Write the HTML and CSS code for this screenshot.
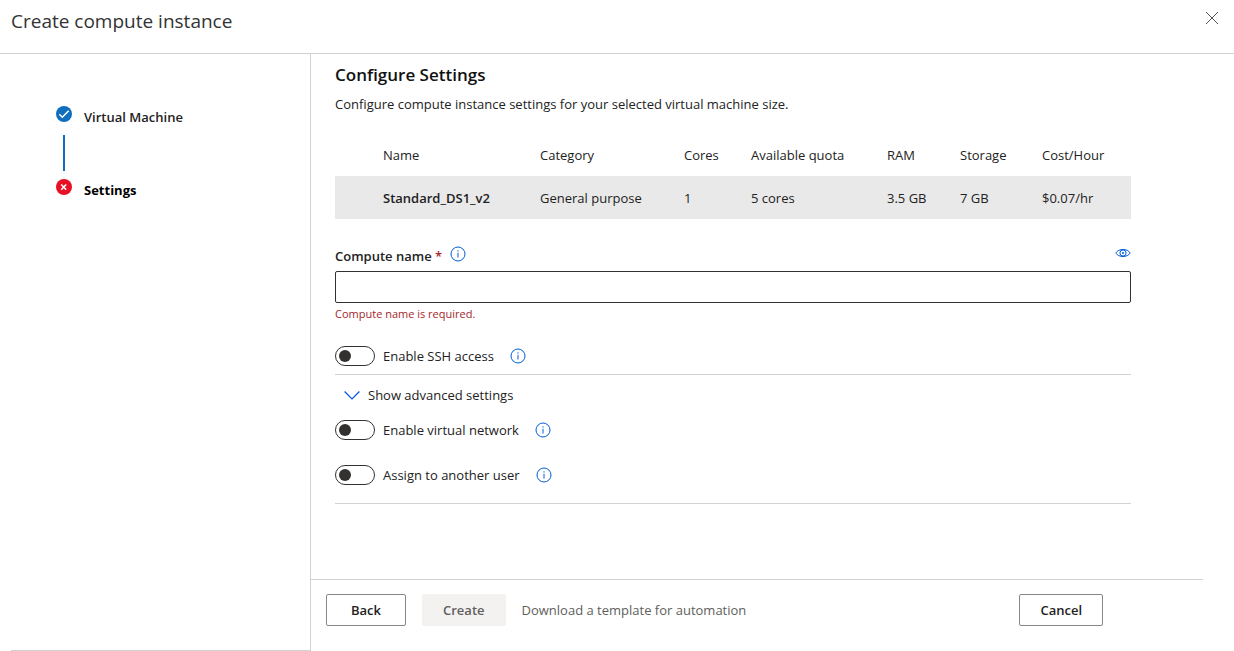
FILE: index.html
```html
<!DOCTYPE html>
<html lang="en">
<head>
<meta charset="utf-8">
<meta name="viewport" content="width=device-width, initial-scale=1">
<title>Create compute instance</title>
<link rel="stylesheet" href="styles.css">
</head>
<body>
<svg class="sprite" aria-hidden="true">
  <symbol id="icon-info" viewBox="0 0 16 16">
    <circle cx="8" cy="8" r="7" fill="none" stroke="currentColor" stroke-width="1"/>
    <path d="M8 6.8v4.7" stroke="currentColor" stroke-width="1"/>
    <circle cx="8" cy="4.9" r=".7" fill="currentColor"/>
  </symbol>
</svg>
<header class="panel-header">
  <h1 class="panel-title">Create compute instance</h1>
  <button class="icon-button close" type="button" aria-label="Close">
    <svg width="14" height="14" viewBox="0 0 14 14"><path d="M1 1l12 12M13 1L1 13" stroke="#555" stroke-width="1" fill="none"/></svg>
  </button>
</header>
<div class="panel-body">
  <nav class="steps" aria-label="Steps">
    <div class="step">
      <svg width="16" height="16" viewBox="0 0 16 16"><circle cx="8" cy="8" r="8" fill="#106ebe"/><path d="M3.3 8.2l3 3 6.400-6.500" fill="none" stroke="#fff" stroke-width="1.5"/></svg>
      <span class="step-label">Virtual Machine</span>
    </div>
    <div class="connector"></div>
    <div class="step" aria-current="step">
      <svg width="16" height="16" viewBox="0 0 16 16"><circle cx="8" cy="8" r="8" fill="#e81123"/><path d="M5.2 5.500l5 5.200M10.200 5.500l-5 5.200" fill="none" stroke="#fff" stroke-width="1.6"/></svg>
      <span class="step-label current">Settings</span>
    </div>
  </nav>
  <div class="content">
    <main class="settings">
      <h2 class="section-title">Configure Settings</h2>
      <p class="description">Configure compute instance settings for your selected virtual machine size.</p>
      <table class="machine">
        <colgroup>
          <col class="col-select"><col class="col-name"><col class="col-category"><col class="col-cores"><col class="col-quota"><col class="col-ram"><col class="col-storage"><col class="col-cost">
        </colgroup>
        <thead>
          <tr><td></td><th scope="col">Name</th><th scope="col">Category</th><th scope="col">Cores</th><th scope="col">Available quota</th><th scope="col">RAM</th><th scope="col">Storage</th><th scope="col">Cost/Hour</th></tr>
        </thead>
        <tbody>
          <tr><td></td><th class="machine-name" scope="row">Standard_DS1_v2</th><td>General purpose</td><td>1</td><td>5 cores</td><td>3.5 GB</td><td>7 GB</td><td>$0.07/hr</td></tr>
        </tbody>
      </table>
      <div class="field-head">
        <label class="field-label" for="compute-name">Compute name <span class="required">*</span></label>
        <button class="icon-button info" type="button" aria-label="About compute name"><svg width="16" height="16"><use href="#icon-info"/></svg></button>
        <button class="icon-button eye" type="button" aria-label="Preview">
          <svg width="16" height="14" viewBox="0 0 16 14" fill="none" stroke="currentColor"><path d="M.8 7C2.3 4.600 4.900 3.500 8 3.500S13.700 4.600 15.200 7C13.700 9.400 11.100 10.500 8 10.500S2.300 9.400.8 7z"/><circle cx="8" cy="7" r="3.100"/><circle cx="8" cy="7" r="1" fill="currentColor" stroke="none"/></svg>
        </button>
      </div>
      <input class="text-box" id="compute-name" type="text" required aria-describedby="name-error">
      <p class="error" id="name-error">Compute name is required.</p>
      <div class="toggle-row ssh">
        <input class="toggle" id="ssh" type="checkbox" role="switch">
        <label for="ssh">Enable SSH access</label>
        <button class="icon-button toggle-info" type="button" aria-label="About SSH access"><svg width="16" height="16"><use href="#icon-info"/></svg></button>
      </div>
      <section class="advanced">
        <button class="disclosure" type="button">
          <svg width="16" height="16" viewBox="0 0 16 16"><path d="M.6 4.5L8 11.9l7.4-7.4" fill="none" stroke="#015cda" stroke-width="1.3"/></svg>
          Show advanced settings
        </button>
        <div class="toggle-row">
          <input class="toggle" id="network" type="checkbox" role="switch">
          <label for="network">Enable virtual network</label>
          <button class="icon-button toggle-info" type="button" aria-label="About virtual network"><svg width="16" height="16"><use href="#icon-info"/></svg></button>
        </div>
        <div class="toggle-row assign">
          <input class="toggle" id="assign" type="checkbox" role="switch">
          <label for="assign">Assign to another user</label>
          <button class="icon-button toggle-info" type="button" aria-label="About assigning to another user"><svg width="16" height="16"><use href="#icon-info"/></svg></button>
        </div>
      </section>
    </main>
    <footer class="actions">
      <button class="button" type="button">Back</button>
      <button class="button" type="button" disabled>Create</button>
      <button class="text-button" type="button" disabled>Download a template for automation</button>
      <button class="button cancel" type="button">Cancel</button>
    </footer>
  </div>
</div>
</body>
</html>
```

FILE: styles.css
```css
* { box-sizing: border-box; }

body {
  display: flex;
  flex-direction: column;
  min-height: 100vh;
  margin: 0;
  background: #fff;
  color: #222;
  font: 13px/20px "Open Sans", "Noto Sans", sans-serif;
}

h1, h2, p { margin: 0; }
svg { display: block; flex: none; }
button, input { font: inherit; color: inherit; }
.sprite { position: absolute; width: 0; height: 0; }

.icon-button {
  padding: 0;
  border: 0;
  background: none;
  color: #015cda;
}

.panel-header {
  display: flex;
  justify-content: space-between;
  align-items: flex-start;
  padding: 7px 15px 18px 11px;
  border-bottom: 1px solid #d2d2d2;
}
.panel-title { font-size: 19px; font-weight: 400; line-height: 28px; color: #333; }
.close { margin-top: 4px; }

.panel-body { display: flex; flex: 1; }

.steps {
  flex: none;
  width: 300px;
  margin-left: 11px;
  padding: 52px 0 0 45px;
  border-right: 1px solid #d2d2d2;
  border-bottom: 1px solid #d2d2d2;
}
.step { display: flex; gap: 12px; line-height: 22px; }
.step-label { font-weight: 600; }
.current { font-weight: 700; color: #000; }
.connector { width: 2px; height: 36px; margin: 7px 0 8px 7px; background: #106ebe; }

.content { display: flex; flex: 1; flex-direction: column; min-width: 0; }
.settings { flex: 1; padding: 9px 103px 24px 24px; }
.section-title { font-size: 17px; font-weight: 600; line-height: 24px; color: #111; }
.description { margin-top: 7px; }

.machine {
  width: 100%;
  margin-top: 20px;
  border-collapse: collapse;
  table-layout: fixed;
}
.machine th, .machine td {
  height: 42px;
  padding: 0;
  font-weight: 400;
  text-align: left;
  white-space: nowrap;
}
.machine tbody { background: #e9e9e9; }
.machine tbody th, .machine tbody td { height: 43px; }
.machine .machine-name { font-weight: 600; }
.col-select { width: 48px; }
.col-name { width: 157px; }
.col-category { width: 144px; }
.col-cores { width: 67px; }
.col-quota { width: 136px; }
.col-ram { width: 73px; }
.col-storage { width: 82px; }
.col-cost { width: 89px; }

.field-head { display: flex; align-items: flex-start; margin-top: 27px; }
.field-label { font-weight: 600; }
.required { color: #a4262c; }
.info { margin-left: 8px; }
.eye { margin-left: auto; }

.text-box {
  display: block;
  width: 100%;
  height: 32px;
  margin-top: 5px;
  padding: 0 8px;
  border: 1px solid #323130;
  border-radius: 2px;
  background: #fff;
}
.error { font-size: 11px; line-height: 22px; color: #a4262c; }

.toggle-row { display: flex; align-items: center; height: 20px; }
.toggle {
  display: flex;
  align-items: center;
  appearance: none;
  width: 40px;
  height: 20px;
  margin: 0 8px 0 0;
  padding: 0 3px;
  border: 1px solid #323130;
  border-radius: 10px;
  background: #fff;
}
.toggle::before {
  content: "";
  width: 12px;
  height: 12px;
  border-radius: 50%;
  background: #323130;
}
.toggle:checked { justify-content: flex-end; }
.toggle-info { margin-left: 16px; }
.ssh { margin-top: 21px; }

.advanced {
  margin-top: 8px;
  padding: 10px 0 18px;
  border: solid #d2d2d2;
  border-width: 1px 0;
}
.disclosure {
  display: flex;
  align-items: center;
  gap: 8px;
  margin: 0 0 15px 9px;
  padding: 0;
  border: 0;
  background: none;
}
.assign { margin-top: 25px; }

.actions {
  display: flex;
  align-items: center;
  gap: 16px;
  margin-right: 31px;
  padding: 14px 100px 25px 15px;
  border-top: 1px solid #d2d2d2;
}
.button {
  min-width: 80px;
  height: 32px;
  padding: 0 20px;
  border: 1px solid #8a8886;
  border-radius: 2px;
  background: #fff;
  font-weight: 600;
}
.button:disabled { border-color: #f3f2f1; background: #f3f2f1; color: #605e5c; }
.text-button { padding: 0; border: 0; background: none; color: #605e5c; }
.cancel { margin-left: auto; }
```
